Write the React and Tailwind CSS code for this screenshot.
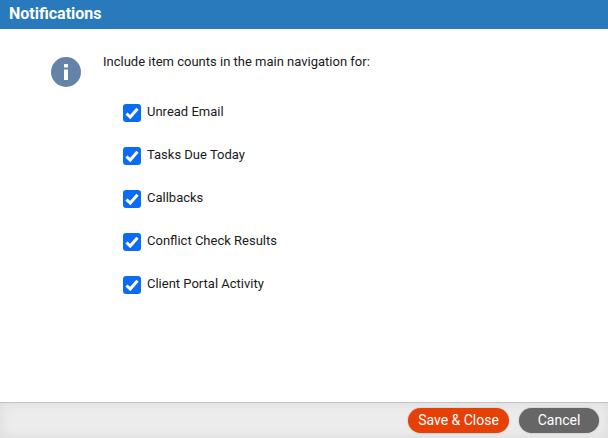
import React from 'react';

const items = ['Unread Email', 'Tasks Due Today', 'Callbacks', 'Conflict Check Results', 'Client Portal Activity'];

function CheckBox() {
  return (
    <span className="w-[18px] h-[18px] rounded-[3px] bg-[#0a6cf5] flex items-center justify-center">
      <svg width="14" height="14" viewBox="0 0 14 14" fill="none">
        <path d="M1.5 7.5 L5.2 11 L12.5 2.8" stroke="white" strokeWidth="3" />
      </svg>
    </span>
  );
}

export default function App() {
  return (
    <div className="w-[608px] h-[438px] flex flex-col bg-white font-['Roboto',sans-serif] overflow-hidden">
      <div className="h-[29px] bg-[#287abd] flex items-center pl-[9px] pb-[1px] shrink-0">
        <span className="text-white font-bold text-[16px]">Notifications</span>
      </div>
      <div className="flex-1 flex pl-[51px] pt-[28px]">
        <div className="w-[30px] h-[30px] rounded-full bg-[#6583a9] flex items-center justify-center shrink-0">
          <svg width="6" height="16" viewBox="0 0 6 16">
            <rect x="1" y="0" width="4" height="3.5" rx="0.5" fill="white" />
            <rect x="1" y="5.5" width="4" height="10.5" fill="white" />
          </svg>
        </div>
        <div className="pl-[22px]">
          <p className="text-[13px] leading-[15px] text-[#1a1a1a] -mt-[3px]">Include item counts in the main navigation for:</p>
          <div className="flex flex-col gap-[25px] mt-[35px] pl-[20px]">
            {items.map((item) => (
              <label key={item} className="flex items-center gap-[6px] h-[18px] text-[13px] text-[#1a1a1a]">
                <CheckBox />
                <span className="-mt-[2px]">{item}</span>
              </label>
            ))}
          </div>
        </div>
      </div>
      <div className="h-[36px] shrink-0 border-t border-[#c4c4c4] bg-[#ececec] shadow-[inset_0_0_12px_#dadada] flex justify-end items-center gap-[10px] pr-[9px]">
        <button className="h-[25px] w-[101px] rounded-full bg-[#e64007] text-white text-[14px] pb-[1px] shadow-[0_0_2px_#00000040]">Save &amp; Close</button>
        <button className="h-[25px] w-[80px] rounded-full bg-[#666666] text-white text-[14px] pb-[1px] shadow-[0_0_2px_#00000040]">Cancel</button>
      </div>
    </div>
  );
}
